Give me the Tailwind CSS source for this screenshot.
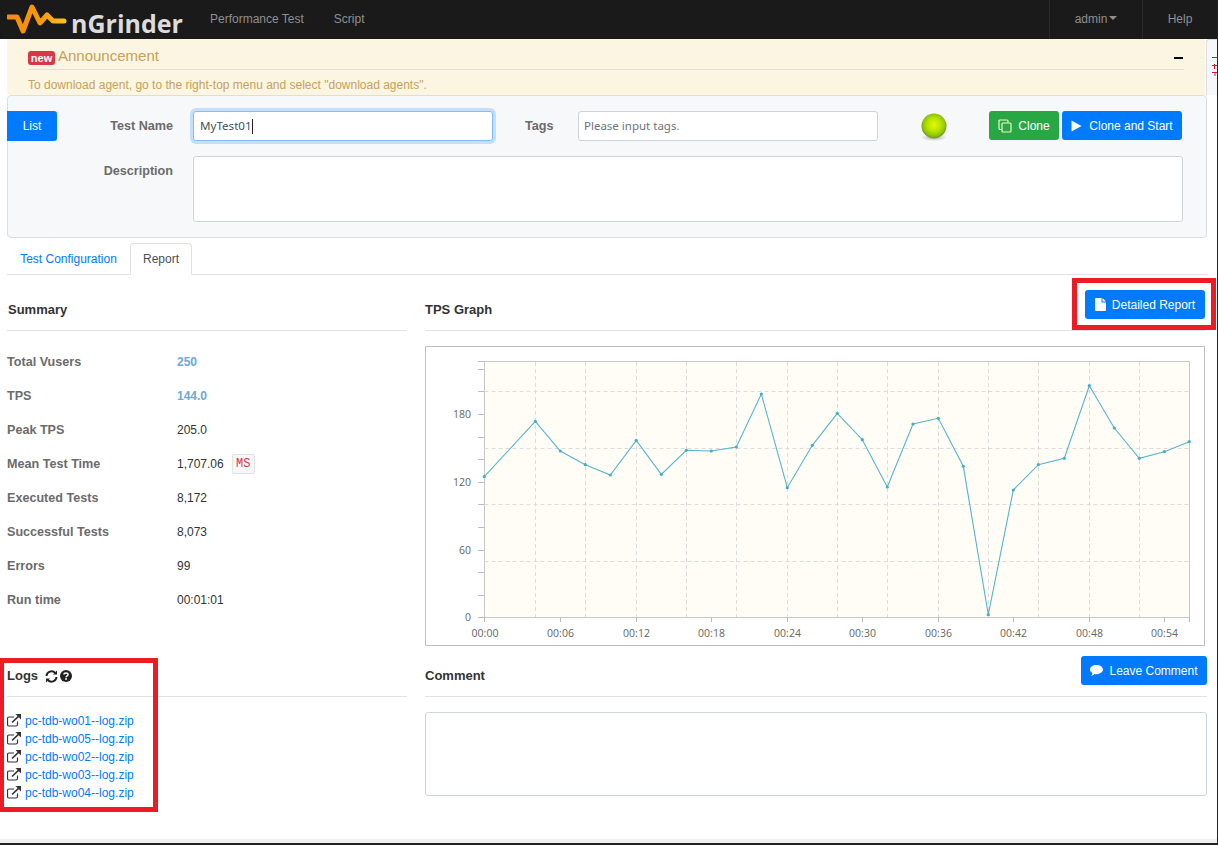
<!DOCTYPE html>
<html lang="en">
<head>
    <meta charset="UTF-8">
    <meta name="viewport" content="width=device-width, initial-scale=1.0">
    <title>nGrinder - Performance Test</title>
    <script src="https://cdn.jsdelivr.net/npm/@tailwindcss/browser@4"></script>
</head>
<body class="bg-white">
    <div class="relative flex flex-col w-[1218px] h-[845px] overflow-hidden border-r border-[#222] bg-white font-['Liberation_Sans',Arial,sans-serif] text-[12px] text-[#333]">

        <!-- Top nav -->
        <nav class="flex items-stretch h-[39px] shrink-0 bg-[#1a1a1a] text-[#8f8f8f]">
            <div class="flex items-center w-[210px] pl-[7px]">
                <svg width="60" height="39" viewBox="7 0 60 39" class="shrink-0">
                    <defs>
                        <linearGradient id="logoWave" x1="0" y1="0" x2="1" y2="0">
                            <stop offset="0%" stop-color="#f58a07"/>
                            <stop offset="60%" stop-color="#f79a0c"/>
                            <stop offset="100%" stop-color="#fcc11a"/>
                        </linearGradient>
                    </defs>
                    <path d="M8 17 H17 L23 31 L32 7 L40 23 L47 15 L53 21 H64" fill="none" stroke="url(#logoWave)" stroke-width="5" stroke-linejoin="round" stroke-linecap="round"/>
                </svg>
                <span class="ml-[4px] mt-[7px] text-[25px] leading-none font-bold text-[#dcdcdc] font-['Open_Sans',sans-serif]">nGrinder</span>
            </div>
            <a class="flex items-center pb-[2px]">Performance Test</a>
            <a class="flex items-center ml-[30px] pb-[2px]">Script</a>
            <div class="flex-1"></div>
            <div class="flex items-center justify-center w-[93px] border-l border-[#2a2a2a] pb-[2px]">
                admin<span class="ml-[2px] mb-[2px] w-0 h-0 border-x-[4px] border-x-transparent border-t-[4px] border-t-[#8f8f8f]"></span>
            </div>
            <div class="flex items-center justify-center w-[75px] border-l border-[#2a2a2a] pb-[2px]">Help</div>
        </nav>

        <!-- Announcement -->
        <div class="flex h-[56px] shrink-0">
            <div class="ml-[7px] w-[1200px] bg-[#fcf5e1] rounded-bl-[4px] pl-[21px] pr-[21px] text-[#c6a15b]">
                <div class="flex items-center h-[31px] pt-[2px] border-b border-[#dedfe0]">
                    <span class="flex items-center justify-center mt-[6px] w-[27px] h-[14px] rounded-[3px] bg-[#dc3545] text-white text-[11px] font-bold leading-none">new</span>
                    <span class="ml-[3px] text-[15px] leading-none">Announcement</span>
                    <span class="ml-auto mr-[1px] w-[9px] h-[2px] mt-[6px] bg-black"></span>
                </div>
                <p class="mt-[8px] leading-[14px]">To download agent, go to the right-top menu and select "download agents".</p>
            </div>
            <div class="flex-1 ml-px bg-[#f6f7fa] border-l border-t border-[#ddd] rounded-tl-[3px]">
                <svg width="10" height="55" viewBox="0 0 10 55" class="block">
                    <path d="M5 17.5 H10 M5 25.5 H10 M5 32.5 H10 M7.5 24 V29 M8 33 V36" stroke="#e0103a" stroke-width="1" fill="none"/>
                </svg>
            </div>
        </div>

        <!-- Test header form -->
        <div class="ml-[7px] w-[1200px] h-[143px] shrink-0 bg-[#f7f8fa] border border-[#ddd] rounded-[4px] pt-[15px]">
            <div class="flex items-start h-[30px]">
                <button class="w-[50px] h-[30px] ml-[-1px] bg-[#007bff] text-white rounded-r-[3px]">List</button>
                <label class="w-[116px] h-[30px] flex items-center justify-end text-[12.6px] font-bold text-[#6b6b6b]">Test Name</label>
                <div class="flex items-center ml-[20px] w-[300px] h-[30px] px-[6px] bg-white border border-[#80bdff] rounded-[3px] shadow-[0_0_0_3px_rgba(0,123,255,0.2)] text-[11.6px] text-[#495057] font-['Noto_Sans',sans-serif]">MyTest01<span class="w-px h-[15px] bg-[#222]"></span></div>
                <label class="ml-[32px] w-[53px] h-[30px] flex items-center text-[12.6px] font-bold text-[#6b6b6b]">Tags</label>
                <input class="w-[300px] h-[30px] px-[5px] pb-[2px] bg-white border border-[#ced4da] rounded-[3px] text-[11.5px] font-['Noto_Sans',sans-serif] placeholder:text-[#6c757d]" placeholder="Please input tags.">
                <svg width="28" height="32" viewBox="0 0 28 32" class="ml-[42px] shrink-0">
                    <defs>
                        <radialGradient id="ballFill" cx="50%" cy="45%" r="50%">
                            <stop offset="0%" stop-color="#e8f800"/>
                            <stop offset="55%" stop-color="#b4e400"/>
                            <stop offset="88%" stop-color="#90c400"/>
                            <stop offset="100%" stop-color="#7f9f28"/>
                        </radialGradient>
                        <radialGradient id="ballShadow" cx="50%" cy="50%" r="50%">
                            <stop offset="0%" stop-color="#888" stop-opacity="0.7"/>
                            <stop offset="100%" stop-color="#888" stop-opacity="0"/>
                        </radialGradient>
                    </defs>
                    <ellipse cx="14" cy="26.5" rx="13" ry="3.5" fill="url(#ballShadow)"/>
                    <circle cx="14" cy="15" r="12.5" fill="url(#ballFill)"/>
                </svg>
                <button class="flex items-center justify-center gap-[6px] ml-[41px] w-[70px] h-[29px] bg-[#28a745] text-white rounded-[3px]">
                    <svg width="14" height="14" viewBox="0 0 14 14" fill="none" stroke="#f4f6d0" stroke-width="1.2">
                        <path d="M3.5 10.5 H2 a1 1 0 0 1 -1 -1 V2 a1 1 0 0 1 1 -1 H9 a1 1 0 0 1 1 1 V3.5"/>
                        <rect x="4" y="4" width="9" height="9" rx="1"/>
                    </svg>
                    Clone
                </button>
                <button class="flex items-center justify-center gap-[7px] ml-[3px] w-[120px] h-[29px] bg-[#007bff] text-white rounded-[3px]">
                    <svg width="11" height="12" viewBox="0 0 11 12"><path d="M0.5 0.5 L10.5 6 L0.5 11.5 Z" fill="#fff"/></svg>
                    Clone and Start
                </button>
            </div>
            <div class="flex items-start mt-[15px]">
                <label class="w-[165px] pt-[8px] text-right text-[12.6px] leading-[15px] font-bold text-[#6b6b6b]">Description</label>
                <textarea class="ml-[20px] w-[990px] h-[66px] bg-white border border-[#ced4da] rounded-[3px] resize-none"></textarea>
            </div>
        </div>

        <!-- Tabs -->
        <div class="flex items-end ml-[7px] w-[1200px] h-[32px] mt-[5px] shrink-0 border-b border-[#dee2e6]">
            <a class="w-[123px] h-[31px] flex items-center justify-center text-[#007bff]">Test Configuration</a>
            <a class="w-[62px] h-[32px] mb-[-1px] flex items-center justify-center bg-white border border-[#dee2e6] border-b-white rounded-t-[4px] text-[#495057]">Report</a>
        </div>

        <!-- Report body -->
        <main class="flex flex-1 pl-[7px]">
            <!-- Left column -->
            <section class="w-[400px] shrink-0">
                <div class="flex items-end h-[56px] pb-[12px] border-b border-[#dee2e6]">
                    <h5 class="pl-px text-[13px] leading-[16px] font-bold text-[#333]">Summary</h5>
                </div>
                <dl class="mt-[14px]">
                    <div class="flex items-center h-[34px]"><dt class="w-[170px] text-[12.6px] font-bold text-[#6b6b6b]">Total Vusers</dt><dd class="font-bold text-[#6aaad4]">250</dd></div>
                    <div class="flex items-center h-[34px]"><dt class="w-[170px] text-[12.6px] font-bold text-[#6b6b6b]">TPS</dt><dd class="font-bold text-[#6aaad4]">144.0</dd></div>
                    <div class="flex items-center h-[34px]"><dt class="w-[170px] text-[12.6px] font-bold text-[#6b6b6b]">Peak TPS</dt><dd>205.0</dd></div>
                    <div class="flex items-center h-[34px]"><dt class="w-[170px] text-[12.6px] font-bold text-[#6b6b6b]">Mean Test Time</dt><dd>1,707.06</dd><code class="flex items-center justify-center ml-[8px] w-[23px] h-[20px] bg-[#f7f7f9] border border-[#e1e1e8] rounded-[2px] text-[12px] text-[#dc3545] font-['Liberation_Mono',monospace]">MS</code></div>
                    <div class="flex items-center h-[34px]"><dt class="w-[170px] text-[12.6px] font-bold text-[#6b6b6b]">Executed Tests</dt><dd>8,172</dd></div>
                    <div class="flex items-center h-[34px]"><dt class="w-[170px] text-[12.6px] font-bold text-[#6b6b6b]">Successful Tests</dt><dd>8,073</dd></div>
                    <div class="flex items-center h-[34px]"><dt class="w-[170px] text-[12.6px] font-bold text-[#6b6b6b]">Errors</dt><dd>99</dd></div>
                    <div class="flex items-center h-[34px]"><dt class="w-[170px] text-[12.6px] font-bold text-[#6b6b6b]">Run time</dt><dd>00:01:01</dd></div>
                </dl>

                <div class="flex items-center h-[41px] mt-[39px] border-b border-[#dee2e6]">
                    <h5 class="text-[13px] font-bold leading-[16px] text-[#333]">Logs</h5>
                    <svg width="13" height="13" viewBox="0 0 13 13" class="ml-[7px]" fill="none" stroke="#222" stroke-width="2">
                        <path d="M1.5 6 A5 5 0 0 1 10.2 3"/>
                        <path d="M11.5 7 A5 5 0 0 1 2.8 10"/>
                        <path d="M12 0.5 V4.5 H8 Z M1 12.5 V8.5 H5 Z" fill="#222" stroke="none"/>
                    </svg>
                    <svg width="12" height="12" viewBox="0 0 12 12" class="ml-[2px]">
                        <circle cx="6" cy="6" r="6" fill="#222"/>
                        <path d="M4 4.6 C4 2.4 8.1 2.4 8.1 4.5 C8.1 5.9 6.1 5.8 6.1 7.2" fill="none" stroke="#fff" stroke-width="1.5"/>
                        <rect x="5.2" y="8.2" width="1.7" height="1.6" fill="#fff"/>
                    </svg>
                </div>
                <ul class="mt-[15px]">
                    <li class="flex items-center h-[18px]">
                        <svg width="14" height="13" viewBox="0 0 14 13" class="mt-[-2px]" fill="none" stroke="#333" stroke-width="1.2"><path d="M10.5 7.5 V10.5 a1.5 1.5 0 0 1 -1.5 1.5 H2 a1.5 1.5 0 0 1 -1.5 -1.5 V4.5 a1.5 1.5 0 0 1 1.5 -1.5 H7"/><path d="M5 8.5 L12 1.8" stroke-width="1.6"/><path d="M8.5 0 H14 V5.5 Z" fill="#333" stroke="none"/></svg>
                        <a class="ml-[4px] text-[#007bff]">pc-tdb-wo01--log.zip</a>
                    </li>
                    <li class="flex items-center h-[18px]">
                        <svg width="14" height="13" viewBox="0 0 14 13" class="mt-[-2px]" fill="none" stroke="#333" stroke-width="1.2"><path d="M10.5 7.5 V10.5 a1.5 1.5 0 0 1 -1.5 1.5 H2 a1.5 1.5 0 0 1 -1.5 -1.5 V4.5 a1.5 1.5 0 0 1 1.5 -1.5 H7"/><path d="M5 8.5 L12 1.8" stroke-width="1.6"/><path d="M8.5 0 H14 V5.5 Z" fill="#333" stroke="none"/></svg>
                        <a class="ml-[4px] text-[#007bff]">pc-tdb-wo05--log.zip</a>
                    </li>
                    <li class="flex items-center h-[18px]">
                        <svg width="14" height="13" viewBox="0 0 14 13" class="mt-[-2px]" fill="none" stroke="#333" stroke-width="1.2"><path d="M10.5 7.5 V10.5 a1.5 1.5 0 0 1 -1.5 1.5 H2 a1.5 1.5 0 0 1 -1.5 -1.5 V4.5 a1.5 1.5 0 0 1 1.5 -1.5 H7"/><path d="M5 8.5 L12 1.8" stroke-width="1.6"/><path d="M8.5 0 H14 V5.5 Z" fill="#333" stroke="none"/></svg>
                        <a class="ml-[4px] text-[#007bff]">pc-tdb-wo02--log.zip</a>
                    </li>
                    <li class="flex items-center h-[18px]">
                        <svg width="14" height="13" viewBox="0 0 14 13" class="mt-[-2px]" fill="none" stroke="#333" stroke-width="1.2"><path d="M10.5 7.5 V10.5 a1.5 1.5 0 0 1 -1.5 1.5 H2 a1.5 1.5 0 0 1 -1.5 -1.5 V4.5 a1.5 1.5 0 0 1 1.5 -1.5 H7"/><path d="M5 8.5 L12 1.8" stroke-width="1.6"/><path d="M8.5 0 H14 V5.5 Z" fill="#333" stroke="none"/></svg>
                        <a class="ml-[4px] text-[#007bff]">pc-tdb-wo03--log.zip</a>
                    </li>
                    <li class="flex items-center h-[18px]">
                        <svg width="14" height="13" viewBox="0 0 14 13" class="mt-[-2px]" fill="none" stroke="#333" stroke-width="1.2"><path d="M10.5 7.5 V10.5 a1.5 1.5 0 0 1 -1.5 1.5 H2 a1.5 1.5 0 0 1 -1.5 -1.5 V4.5 a1.5 1.5 0 0 1 1.5 -1.5 H7"/><path d="M5 8.5 L12 1.8" stroke-width="1.6"/><path d="M8.5 0 H14 V5.5 Z" fill="#333" stroke="none"/></svg>
                        <a class="ml-[4px] text-[#007bff]">pc-tdb-wo04--log.zip</a>
                    </li>
                </ul>
            </section>

            <!-- Right column -->
            <section class="ml-[18px] w-[782px] shrink-0">
                <div class="flex justify-between w-[780px] h-[56px] pt-[15px] border-b border-[#dee2e6]">
                    <h5 class="pt-[12px] text-[13px] leading-[16px] font-bold text-[#333]">TPS Graph</h5>
                    <button class="flex items-center justify-center gap-[6px] w-[120px] h-[29px] bg-[#007bff] text-white rounded-[3px]">
                        <svg width="11" height="13" viewBox="0 0 11 13"><path d="M0 1 a1 1 0 0 1 1 -1 H6.5 V4 a0.5 0.5 0 0 0 0.5 0.5 H11 V12 a1 1 0 0 1 -1 1 H1 a1 1 0 0 1 -1 -1 Z M7.5 0 L11 3.5 H7.5 Z" fill="#fff"/></svg>
                        Detailed Report
                    </button>
                </div>

                <div class="w-[780px] h-[300px] mt-[15px] border border-[#c0c0c0]">
                    <svg width="778" height="298" viewBox="426 347 778 298" class="block font-['Open_Sans',sans-serif]">
                        <rect x="484.5" y="361.5" width="705" height="256" fill="#fffdf6" stroke="#c8c8c8"/>
                        <path d="M484.5 391.5 H1189 M484.5 448.5 H1189 M484.5 504.5 H1189 M484.5 561.5 H1189" stroke="#dcdcdc" stroke-dasharray="4 3"/>
                        <path d="M535.5 362 V617 M585.5 362 V617 M636.5 362 V617 M686.5 362 V617 M736.5 362 V617 M787.5 362 V617 M837.5 362 V617 M887.5 362 V617 M938.5 362 V617 M988.5 362 V617 M1038.5 362 V617 M1089.5 362 V617 M1139.5 362 V617" stroke="#dcdcdc" stroke-dasharray="4 3"/>
                        <path d="M478 361.5 H484 M478 369.5 H484 M478 391.5 H484 M478 414.5 H484 M478 437.5 H484 M478 459.5 H484 M478 482.5 H484 M478 504.5 H484 M478 527.5 H484 M478 550.5 H484 M478 572.5 H484 M478 595.5 H484 M478 617.5 H484" stroke="#bbb"/>
                        <path d="M484.5 617 V622 M560.5 617 V622 M636.5 617 V622 M711.5 617 V622 M787.5 617 V622 M862.5 617 V622 M938.5 617 V622 M1013.5 617 V622 M1089.5 617 V622 M1164.5 617 V622 M1189.5 617 V622" stroke="#bbb"/>
                        <g fill="#666" font-size="10.5" text-anchor="end">
                            <text x="471" y="418">180</text>
                            <text x="471" y="486">120</text>
                            <text x="471" y="554">60</text>
                            <text x="471" y="621">0</text>
                        </g>
                        <g fill="#666" font-size="10.5" text-anchor="middle">
                            <text x="485" y="637">00:00</text>
                            <text x="560.5" y="637">00:06</text>
                            <text x="636.5" y="637">00:12</text>
                            <text x="711.5" y="637">00:18</text>
                            <text x="787.5" y="637">00:24</text>
                            <text x="862.5" y="637">00:30</text>
                            <text x="938.5" y="637">00:36</text>
                            <text x="1013.5" y="637">00:42</text>
                            <text x="1089.5" y="637">00:48</text>
                            <text x="1164.5" y="637">00:54</text>
                        </g>
                        <polyline fill="none" stroke="#56b5c9" stroke-width="1.1" points="484.3,476.7 535.3,421.3 560.3,451 585.3,464.7 610.3,475 636.3,440.3 661.3,474.3 686.3,450.3 711.3,451 736.3,447 761.3,394 787.3,487.7 812.3,445.3 837.3,413.3 862.3,439.7 887.3,487 913,424 938.3,418.3 963.3,466.3 988.3,614.7 1013.3,490 1038.3,464.7 1064.3,458.3 1089.3,385.7 1114.3,428 1139.3,458.3 1164.3,451.7 1189.3,441.7"/>
                        <g fill="#45adc4">
                            <circle cx="535.3" cy="421.3" r="1.6"/><circle cx="560.3" cy="451" r="1.6"/><circle cx="585.3" cy="464.7" r="1.6"/><circle cx="610.3" cy="475" r="1.6"/><circle cx="636.3" cy="440.3" r="1.6"/><circle cx="661.3" cy="474.3" r="1.6"/><circle cx="686.3" cy="450.3" r="1.6"/><circle cx="711.3" cy="451" r="1.6"/><circle cx="736.3" cy="447" r="1.6"/><circle cx="761.3" cy="394" r="1.6"/><circle cx="787.3" cy="487.7" r="1.6"/><circle cx="812.3" cy="445.3" r="1.6"/><circle cx="837.3" cy="413.3" r="1.6"/><circle cx="862.3" cy="439.7" r="1.6"/><circle cx="887.3" cy="487" r="1.6"/><circle cx="913" cy="424" r="1.6"/><circle cx="938.3" cy="418.3" r="1.6"/><circle cx="963.3" cy="466.3" r="1.6"/><circle cx="988.3" cy="614.7" r="1.6"/><circle cx="1013.3" cy="490" r="1.6"/><circle cx="1038.3" cy="464.7" r="1.6"/><circle cx="1064.3" cy="458.3" r="1.6"/><circle cx="1089.3" cy="385.7" r="1.6"/><circle cx="1114.3" cy="428" r="1.6"/><circle cx="1139.3" cy="458.3" r="1.6"/><circle cx="1164.3" cy="451.7" r="1.6"/><circle cx="1189.3" cy="441.7" r="1.6"/><circle cx="484.3" cy="476.7" r="1.6"/>
                        </g>
                    </svg>
                </div>

                <div class="flex justify-between h-[41px] mt-[10px] border-b border-[#dee2e6]">
                    <h5 class="pt-[12px] text-[13px] leading-[16px] font-bold text-[#333]">Comment</h5>
                    <button class="flex items-center justify-center gap-[6px] w-[126px] h-[29px] bg-[#007bff] text-white rounded-[3px]">
                        <svg width="13" height="11" viewBox="0 0 13 11"><path d="M6.5 0 C10.1 0 13 2 13 4.6 C13 7.2 10.1 9.2 6.5 9.2 C5.8 9.2 5.2 9.1 4.6 9 C3.7 9.9 2.4 10.6 1 10.8 C1.8 10 2.3 9 2.4 8.1 C0.9 7.2 0 6 0 4.6 C0 2 2.9 0 6.5 0 Z" fill="#fff"/></svg>
                        Leave Comment
                    </button>
                </div>
                <textarea class="block w-[782px] h-[84px] mt-[15px] bg-white border border-[#ced4da] rounded-[3px] resize-none"></textarea>
            </section>
        </main>

        <!-- Window bottom edge -->
        <div class="h-[6px] shrink-0 bg-[#f0f0f0] border-b-[2px] border-[#222]"></div>

        <!-- Red highlight boxes drawn over the screenshot -->
        <div class="absolute left-[1072px] top-[278px] w-[144px] h-[52px] border-[5px] border-[#ed1c24]"></div>
        <div class="absolute left-[-1px] top-[658px] w-[159px] h-[154px] border-[5px] border-[#ed1c24]"></div>
    </div>
</body>
</html>
